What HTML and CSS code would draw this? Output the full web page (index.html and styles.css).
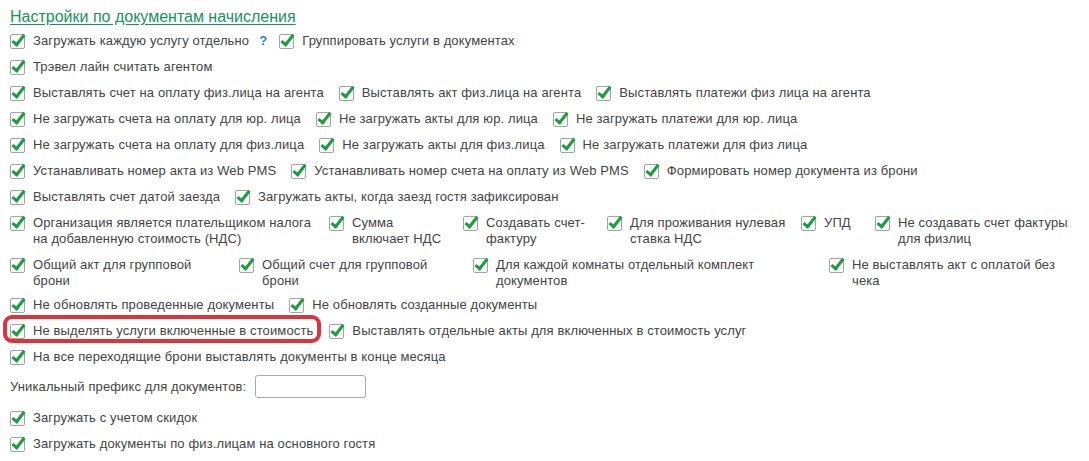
FILE: index.html
```html
<!DOCTYPE html>
<html lang="ru">
<head>
  <meta charset="UTF-8">
  <title>Настройки по документам начисления</title>
  <link rel="stylesheet" href="styles.css">
</head>
<body>
  <h2 class="group-title">Настройки по документам начисления</h2>

  <div class="row">
    <label class="cb"><span class="box"></span>Загружать каждую услугу отдельно</label>
    <span class="hint">?</span>
    <label class="cb"><span class="box"></span>Группировать услуги в документах</label>
  </div>
  <div class="row">
    <label class="cb"><span class="box"></span>Трэвел лайн считать агентом</label>
  </div>
  <div class="row">
    <label class="cb"><span class="box"></span>Выставлять счет на оплату физ.лица на агента</label>
    <label class="cb"><span class="box"></span>Выставлять акт физ.лица на агента</label>
    <label class="cb"><span class="box"></span>Выставлять платежи физ лица на агента</label>
  </div>
  <div class="row">
    <label class="cb"><span class="box"></span>Не загружать счета на оплату для юр. лица</label>
    <label class="cb"><span class="box"></span>Не загружать акты для юр. лица</label>
    <label class="cb"><span class="box"></span>Не загружать платежи для юр. лица</label>
  </div>
  <div class="row">
    <label class="cb"><span class="box"></span>Не загружать счета на оплату для физ.лица</label>
    <label class="cb"><span class="box"></span>Не загружать акты для физ.лица</label>
    <label class="cb"><span class="box"></span>Не загружать платежи для физ лица</label>
  </div>
  <div class="row">
    <label class="cb"><span class="box"></span>Устанавливать номер акта из Web PMS</label>
    <label class="cb"><span class="box"></span>Устанавливать номер счета на оплату из Web PMS</label>
    <label class="cb"><span class="box"></span>Формировать номер документа из брони</label>
  </div>
  <div class="row">
    <label class="cb"><span class="box"></span>Выставлять счет датой заезда</label>
    <label class="cb"><span class="box"></span>Загружать акты, когда заезд гостя зафиксирован</label>
  </div>

  <!-- колонки фиксированной ширины, подписи переносятся -->
  <div class="row cols nds">
    <label class="cb"><span class="box"></span><span>Организация является плательщиком налога<br>на добавленную стоимость (НДС)</span></label>
    <label class="cb"><span class="box"></span><span>Сумма<br>включает НДС</span></label>
    <label class="cb"><span class="box"></span><span>Создавать счет-<br>фактуру</span></label>
    <label class="cb"><span class="box"></span><span>Для проживания нулевая<br>ставка НДС</span></label>
    <label class="cb"><span class="box"></span><span>УПД</span></label>
    <label class="cb"><span class="box"></span><span>Не создавать счет фактуры<br>для физлиц</span></label>
  </div>
  <div class="row cols groups">
    <label class="cb"><span class="box"></span><span>Общий акт для групповой<br>брони</span></label>
    <label class="cb"><span class="box"></span><span>Общий счет для групповой<br>брони</span></label>
    <label class="cb"><span class="box"></span><span>Для каждой комнаты отдельный комплект<br>документов</span></label>
    <label class="cb"><span class="box"></span><span>Не выставлять акт с оплатой без<br>чека</span></label>
  </div>

  <div class="row">
    <label class="cb"><span class="box"></span>Не обновлять проведенные документы</label>
    <label class="cb"><span class="box"></span>Не обновлять созданные документы</label>
  </div>
  <div class="row marked">
    <label class="cb selected"><span class="box"></span>Не выделять услуги включенные в стоимость</label>
    <label class="cb"><span class="box"></span>Выставлять отдельные акты для включенных в стоимость услуг</label>
  </div>
  <div class="row">
    <label class="cb"><span class="box"></span>На все переходящие брони выставлять документы в конце месяца</label>
  </div>
  <div class="row field">
    <label for="prefix">Уникальный префикс для документов:</label>
    <input type="text" id="prefix">
  </div>
  <div class="row">
    <label class="cb"><span class="box"></span>Загружать с учетом скидок</label>
  </div>
  <div class="row">
    <label class="cb"><span class="box"></span>Загружать документы по физ.лицам на основного гостя</label>
  </div>
</body>
</html>
```

FILE: styles.css
```css
body {
  margin: 0;
  padding: 8px 10px;
  font-family: "Liberation Sans", Arial, sans-serif;
  font-size: 13px;
  line-height: 16px;
  letter-spacing: 0.12px;
  color: #444;
  background-color: #fff;
}
.group-title {
  margin: 0 0 7px;
  font-size: 16px;
  font-weight: normal;
  line-height: 18px;
  letter-spacing: 0;
  color: #17935e;
  text-decoration: underline;
  text-underline-offset: 2px;
}
.row {
  display: flex;
  align-items: flex-start;
  margin-bottom: 10px;
}
.cb {
  display: inline-flex;
  align-items: flex-start;
  margin-right: 15px;
  white-space: nowrap;
}
.box {
  position: relative;
  flex: none;
  width: 13px;
  height: 13px;
  margin: 1px 8px 0 0;
  border: 1px solid #a3a3a3;
  border-radius: 2px;
  background-color: #fff;
}
/* зелёная галочка, выходит за рамку сверху */
.box::after {
  content: "";
  position: absolute;
  left: 4px;
  top: -3px;
  width: 4px;
  height: 11px;
  border-right: 3px solid #1a9e3f;
  border-bottom: 3px solid #1a9e3f;
  transform: rotate(38deg);
}
.hint {
  margin: 0 12px 0 -5px;
  color: #1f7fd0;
  font-weight: bold;
}

.cols .cb {
  margin-right: 0;
}
.nds .cb:nth-child(1) { width: 319px; }
.nds .cb:nth-child(2) { width: 134px; }
.nds .cb:nth-child(3) { width: 144px; }
.nds .cb:nth-child(4) { width: 194px; }
.nds .cb:nth-child(5) { width: 74px; }
.groups {
  margin-bottom: 8px;
}
.groups .cb:nth-child(1) { width: 229px; }
.groups .cb:nth-child(2) { width: 234px; }
.groups .cb:nth-child(3) { width: 356px; }

.marked {
  margin-top: 1px;
}
/* выделенная красной рамкой настройка */
.selected {
  padding: 4px 4px 0 3px;
  margin: -4px 12px 0 -3px;
  outline: 4px solid #dc343b;
  outline-offset: 0;
  border-radius: 5px;
}
.field {
  align-items: center;
  margin-bottom: 12px;
}
.field label {
  margin-right: 9px;
}
.field input {
  width: 111px;
  height: 23px;
  padding: 0 4px;
  box-sizing: border-box;
  border: 1px solid #aaa;
  border-radius: 3px;
  font: inherit;
}
```
